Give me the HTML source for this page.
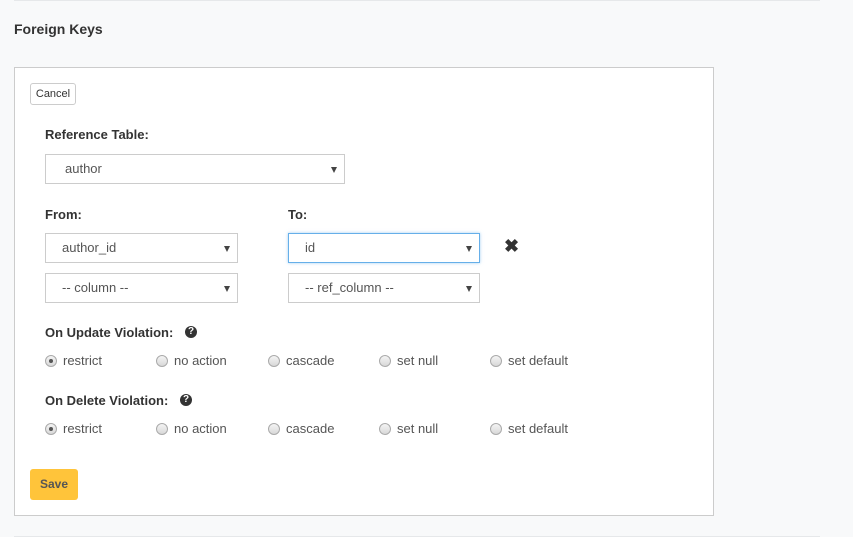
<!DOCTYPE html>
<html><head><style>
*{box-sizing:border-box;margin:0;padding:0}
body{width:853px;height:537px;background:#f8f9fa;font-family:"Liberation Sans",sans-serif;color:#333;position:relative;overflow:hidden}
.a{position:absolute}
.line{position:absolute;left:14px;width:806px;height:1px;background:#e6e8ea}
.box{left:14px;top:67px;width:700px;height:449px;background:#fff;border:1px solid #ccc}
.lbl{font-size:13px;font-weight:bold;color:#333}
.sel{position:absolute;height:30px;border:1px solid #ccc;background:#fff;font-size:13px;color:#555;line-height:28px}
.sel:after{content:"";position:absolute;right:7px;top:12px;border-left:3.5px solid transparent;border-right:3.5px solid transparent;border-top:6px solid #444}
.r{position:absolute;font-size:13px;color:#555;line-height:16px}
.r i{position:absolute;left:-18px;top:2px;width:12px;height:12px;border-radius:50%;border:1px solid #aaa;background:linear-gradient(#f4f4f4,#d8d8d8)}
.r i.on:after{content:"";position:absolute;left:3px;top:3px;width:4px;height:4px;border-radius:50%;background:#555}
.q{position:absolute;width:12px;height:12px;border-radius:50%;background:#333;color:#fff;font-size:10px;font-weight:bold;text-align:center;line-height:12px}
</style></head><body>
<div class="line" style="top:0"></div>
<div class="line" style="top:536px"></div>
<div class="a lbl" style="left:14px;top:21px;font-size:14px">Foreign Keys</div>
<div class="a box"></div>
<div class="a" style="left:30px;top:83px;width:46px;height:22px;border:1px solid #ccc;border-radius:3px;background:#fff;font-size:11px;line-height:20px;text-align:center;color:#333">Cancel</div>
<div class="a lbl" style="left:45px;top:127px">Reference Table:</div>
<div class="sel" style="left:45px;top:154px;width:300px;padding-left:19px">author</div>
<div class="a lbl" style="left:45px;top:207px">From:</div>
<div class="a lbl" style="left:288px;top:207px">To:</div>
<div class="sel" style="left:45px;top:233px;width:193px;padding-left:16px">author_id</div>
<div class="sel" style="left:288px;top:233px;width:192px;padding-left:16px;border-color:#66afe9;box-shadow:0 0 3px rgba(102,175,233,.6)">id</div>
<div class="a" style="left:504px;top:236px;font-size:18px;font-weight:bold;color:#333">✖</div>
<div class="sel" style="left:45px;top:273px;width:193px;padding-left:16px">-- column --</div>
<div class="sel" style="left:288px;top:273px;width:192px;padding-left:16px">-- ref_column --</div>
<div class="a lbl" style="left:45px;top:325px">On Update Violation:</div>
<div class="q" style="left:185px;top:326px">?</div>
<div class="r" style="left:63px;top:353px"><i class="on"></i>restrict</div>
<div class="r" style="left:174px;top:353px"><i></i>no action</div>
<div class="r" style="left:286px;top:353px"><i></i>cascade</div>
<div class="r" style="left:397px;top:353px"><i></i>set null</div>
<div class="r" style="left:508px;top:353px"><i></i>set default</div>
<div class="a lbl" style="left:45px;top:393px">On Delete Violation:</div>
<div class="q" style="left:180px;top:394px">?</div>
<div class="r" style="left:63px;top:421px"><i class="on"></i>restrict</div>
<div class="r" style="left:174px;top:421px"><i></i>no action</div>
<div class="r" style="left:286px;top:421px"><i></i>cascade</div>
<div class="r" style="left:397px;top:421px"><i></i>set null</div>
<div class="r" style="left:508px;top:421px"><i></i>set default</div>
<div class="a" style="left:30px;top:469px;width:48px;height:31px;background:#ffc43a;border-radius:3px;font-size:12px;font-weight:bold;color:#555;text-align:center;line-height:31px">Save</div>
</body></html>
